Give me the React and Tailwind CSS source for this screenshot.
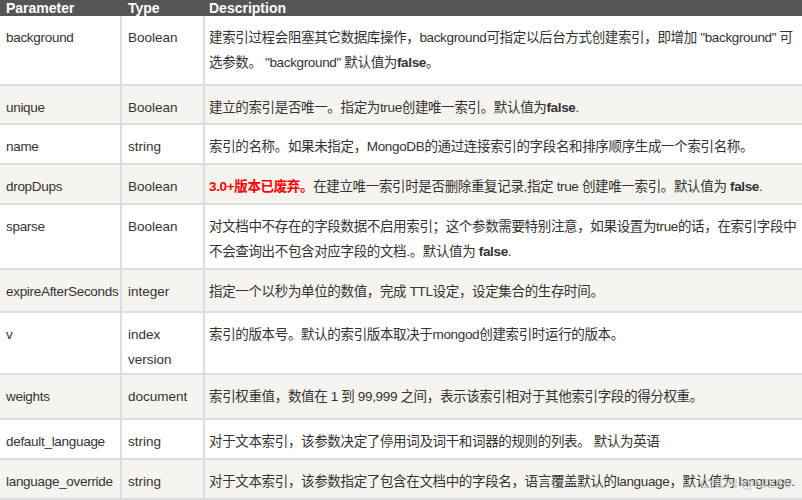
const rows = [
  ["background","Boolean",<>建索引过程会阻塞其它数据库操作，background可指定以后台方式创建索引，即增加 "background" 可选参数。 "background" 默认值为<b>false</b>。</>,70],
  ["unique","Boolean",<>建立的索引是否唯一。指定为true创建唯一索引。默认值为<b>false</b>.</>,39],
  ["name","string",<>索引的名称。如果未指定，MongoDB的通过连接索引的字段名和排序顺序生成一个索引名称。</>,40],
  ["dropDups","Boolean",<><b className="text-[#ff0000]">3.0+版本已废弃。</b>在建立唯一索引时是否删除重复记录,指定 true 创建唯一索引。默认值为 <b>false</b>.</>,40],
  ["sparse","Boolean",<>对文档中不存在的字段数据不启用索引；这个参数需要特别注意，如果设置为true的话，在索引字段中不会查询出不包含对应字段的文档.。默认值为 <b>false</b>.</>,65],
  ["expireAfterSeconds","integer",<>指定一个以秒为单位的数值，完成 TTL设定，设定集合的生存时间。</>,43],
  ["v",<>index<br/>version</>,<>索引的版本号。默认的索引版本取决于mongod创建索引时运行的版本。</>,62],
  ["weights","document",<>索引权重值，数值在 1 到 99,999 之间，表示该索引相对于其他索引字段的得分权重。</>,45],
  ["default_language","string",<>对于文本索引，该参数决定了停用词及词干和词器的规则的列表。 默认为英语</>,40],
  ["language_override","string",<>对于文本索引，该参数指定了包含在文档中的字段名，语言覆盖默认的language，默认值为 language.</>,40],
];
export default function App(){
  return <div className="relative w-[802px] h-[500px] overflow-hidden bg-white text-[13.5px] leading-[25px] text-[#333]" style={{fontFamily:'"Liberation Sans","Noto Sans CJK SC",sans-serif'}}>
    <div className="flex h-[16px] bg-[#555] text-white font-bold leading-[16px] text-[14px]">
      <div className="w-[122px] pl-[6px]">Parameter</div>
      <div className="w-[83px] pl-[6px]">Type</div>
      <div className="flex-1 pl-[4px]">Description</div>
    </div>
    {rows.map((r,i)=>(
      <div key={i} className={"flex border-b-2 border-[#ddd] "+(i%2?"bg-[#f6f4f0]":"bg-white")} style={{height:r[3]}}>
        <div className="w-[122px] shrink-0 border-r-2 border-[#ddd] pl-[6px] pt-[9px] whitespace-nowrap tracking-[-0.3px]">{r[0]}</div>
        <div className="w-[83px] shrink-0 border-r-2 border-[#ddd] pl-[6px] pt-[9px]">{r[1]}</div>
        <div className="flex-1 pl-[4px] pr-[2px] pt-[9px] tracking-[-0.35px]">{r[2]}</div>
      </div>
    ))}
    <div className="absolute right-[10px] bottom-[9px] text-[13px] leading-[14px] text-[#c8c8c8]">CSDN @N/Z/R/</div>
  </div>
}
